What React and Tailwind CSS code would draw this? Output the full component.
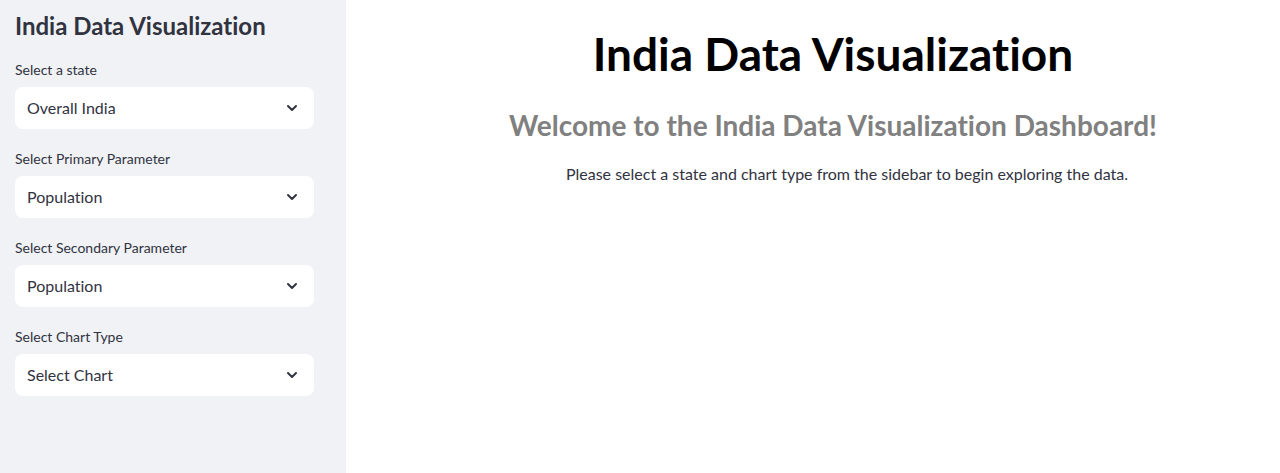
import React from "react";

const Chevron = () => (
  <svg width="16" height="16" viewBox="0 0 24 24" fill="none" stroke="#31333F" strokeWidth="3" strokeLinecap="round" strokeLinejoin="round">
    <path d="M6 9l6 6 6-6" />
  </svg>
);

const Select = ({ label, value }) => (
  <div className="flex flex-col">
    <div className="text-[14px] leading-[20px] text-[#31333F] h-[20px] mb-[7px]">{label}</div>
    <div className="h-[42px] bg-white rounded-[8px] flex items-center justify-between pl-[12px] pr-[14px]">
      <span className="text-[16px] text-[#31333F]">{value}</span>
      <Chevron />
    </div>
  </div>
);

export default function App() {
  return (
    <div className="flex w-[1280px] h-[473px] bg-white [font-variant-ligatures:none]" style={{ fontFamily: "Lato, 'Noto Sans', sans-serif" }}>
      <aside className="w-[346px] shrink-0 bg-[#f0f2f6] px-[15px] pt-[10px]">
        <h2 className="text-[24px] leading-[32px] font-bold text-[#31333F] mb-[18px]">India Data Visualization</h2>
        <div className="flex flex-col gap-[20px] w-[299px]">
          <Select label="Select a state" value="Overall India" />
          <Select label="Select Primary Parameter" value="Population" />
          <Select label="Select Secondary Parameter" value="Population" />
          <Select label="Select Chart Type" value="Select Chart" />
        </div>
      </aside>
      <main className="flex-1 pl-[60px] pr-[20px] pt-[26px] flex flex-col items-center">
        <h1 className="text-[46px] leading-[56px] font-bold text-black">India Data Visualization</h1>
        <h3 className="mt-[25px] text-[28px] leading-[36px] font-bold text-[#808080]">Welcome to the India Data Visualization Dashboard!</h3>
        <p className="mt-[19px] text-[16px] leading-[24px] text-[#31333F] pl-[28px]">Please select a state and chart type from the sidebar to begin exploring the data.</p>
      </main>
    </div>
  );
}
